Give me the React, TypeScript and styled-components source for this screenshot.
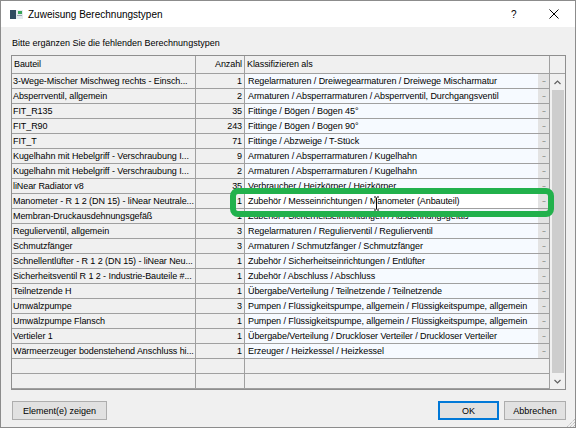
import React from "react";
import styled, { createGlobalStyle } from "styled-components";

const GlobalStyle = createGlobalStyle`
    html, body { margin: 0; padding: 0; background: #f0f0f0; }
    body { font-family: "Liberation Sans", Arial, sans-serif; }
    * { box-sizing: border-box; }
`;

type Entry = { part: string; count: number; cls: string };

const entries: Entry[] = [
    { part: "3-Wege-Mischer Mischweg rechts - Einsch...", count: 1, cls: "Regelarmaturen / Dreiwegearmaturen / Dreiwege Mischarmatur" },
    { part: "Absperrventil, allgemein", count: 2, cls: "Armaturen / Absperrarmaturen / Absperrventil, Durchgangsventil" },
    { part: "FIT_R135", count: 35, cls: "Fittinge / Bögen / Bogen 45°" },
    { part: "FIT_R90", count: 243, cls: "Fittinge / Bögen / Bogen 90°" },
    { part: "FIT_T", count: 71, cls: "Fittinge / Abzweige / T-Stück" },
    { part: "Kugelhahn mit Hebelgriff - Verschraubung I...", count: 9, cls: "Armaturen / Absperrarmaturen / Kugelhahn" },
    { part: "Kugelhahn mit Hebelgriff - Verschraubung I...", count: 2, cls: "Armaturen / Absperrarmaturen / Kugelhahn" },
    { part: "liNear Radiator v8", count: 35, cls: "Verbraucher / Heizkörper / Heizkörper" },
    { part: "Manometer - R 1 2 (DN 15) - liNear Neutrale...", count: 1, cls: "Zubehör / Messeinrichtungen / Manometer (Anbauteil)" },
    { part: "Membran-Druckausdehnungsgefäß", count: 1, cls: "Zubehör / Sicherheitseinrichtungen / Ausdehnungsgefäß" },
    { part: "Regulierventil, allgemein", count: 3, cls: "Regelarmaturen / Regulierventil / Regulierventil" },
    { part: "Schmutzfänger", count: 3, cls: "Armaturen / Schmutzfänger / Schmutzfänger" },
    { part: "Schnellentlüfter - R 1 2 (DN 15) - liNear Neu...", count: 1, cls: "Zubehör / Sicherheitseinrichtungen / Entlüfter" },
    { part: "Sicherheitsventil R 1 2 - Industrie-Bauteile #...", count: 1, cls: "Zubehör / Abschluss / Abschluss" },
    { part: "Teilnetzende H", count: 1, cls: "Übergabe/Verteilung / Teilnetzende / Teilnetzende" },
    { part: "Umwälzpumpe", count: 3, cls: "Pumpen / Flüssigkeitspumpe, allgemein / Flüssigkeitspumpe, allgemein" },
    { part: "Umwälzpumpe Flansch", count: 1, cls: "Pumpen / Flüssigkeitspumpe, allgemein / Flüssigkeitspumpe, allgemein" },
    { part: "Vertieler 1", count: 1, cls: "Übergabe/Verteilung / Druckloser Verteiler / Druckloser Verteiler" },
    { part: "Wärmeerzeuger bodenstehend Anschluss hi...", count: 1, cls: "Erzeuger / Heizkessel / Heizkessel" },
];

const EDIT_ROW = 8;
const EMPTY_ROWS = 2;

const COL_PART = 184;
const COL_COUNT = 49;
const COL_CLASS = 305;
const SCROLL_W = 15;

const Window = styled.div`
    position: relative;
    width: 576px;
    height: 428px;
    border: 1px solid #8c8c8c;
    background: #f0f0f0;
    display: flex;
    flex-direction: column;
    overflow: hidden;
`;

const TitleBar = styled.div`
    height: 26px;
    background: #ffffff;
    display: flex;
    align-items: center;
    padding: 0 0 0 9px;
`;

const TitleText = styled.span`
    margin-left: 5px;
    font-size: 10px;
    color: #000;
    flex: 1;
`;

const HelpGlyph = styled.span`
    font-size: 10px;
    color: #000;
    width: 38px;
    text-align: left;
`;

const CloseBox = styled.span`
    width: 26px;
    display: flex;
    align-items: center;
`;

const Content = styled.div`
    flex: 1;
    display: flex;
    flex-direction: column;
    padding: 10px 9px 0 10px;
`;

const Prompt = styled.div`
    font-size: 9px;
    line-height: 12px;
    color: #000;
    padding-left: 1px;
    margin-bottom: 6px;
`;

const Grid = styled.div`
    width: 555px;
    border: 1px solid #8f8f8f;
    background: #f0f0f0;
    font-size: 9px;
    letter-spacing: -0.08px;
    color: #000;
`;

const HeaderRow = styled.div`
    display: flex;
    height: 18px;
    border-bottom: 1px solid #a0a0a0;
`;

const HeaderCell = styled.div<{ $w: number; $align?: "left" | "right"; $last?: boolean }>`
    width: ${(p) => p.$w}px;
    flex: none;
    line-height: 17px;
    padding: 0 2px;
    text-align: ${(p) => p.$align ?? "left"};
    border-right: ${(p) => (p.$last ? "none" : "1px solid #a0a0a0")};
    white-space: nowrap;
    overflow: hidden;
`;

const BodyWrap = styled.div`
    display: flex;
`;

const RowList = styled.div`
    display: flex;
    flex-direction: column;
`;

const Row = styled.div`
    display: flex;
    height: 15px;
    border-bottom: 1px solid #a0a0a0;
`;

const Cell = styled.div<{ $w: number; $align?: "left" | "right" }>`
    width: ${(p) => p.$w}px;
    flex: none;
    line-height: 14px;
    padding: 0 2px 0 1px;
    text-align: ${(p) => p.$align ?? "left"};
    border-right: 1px solid #a0a0a0;
    white-space: nowrap;
    overflow: hidden;
`;

const ClassCell = styled.div<{ $editing?: boolean }>`
    width: ${COL_CLASS}px;
    flex: none;
    display: flex;
    border-right: 1px solid #a0a0a0;
    background: ${(p) => (p.$editing ? "#ffffff" : "#f6faff")};
`;

const ClassText = styled.span`
    flex: 1;
    line-height: 14px;
    padding-left: 3px;
    white-space: nowrap;
    overflow: hidden;
`;

const DotsButton = styled.span`
    width: 11px;
    flex: none;
    background: #e3e3e3;
    color: #555;
    font-size: 7px;
    line-height: 12px;
    text-align: center;
    letter-spacing: -1px;
`;

const ScrollBar = styled.div`
    width: ${SCROLL_W}px;
    display: flex;
    flex-direction: column;
    background: #f0f0f0;
`;

const ScrollArrow = styled.div`
    height: 16px;
    display: flex;
    align-items: center;
    justify-content: center;
`;

const ScrollThumb = styled.div`
    flex: 1;
    margin: 0 1px 0 2px;
    background: #cdcdcd;
`;

const Footer = styled.div`
    display: flex;
    margin-top: 11px;
    gap: 5px;
`;

const Button = styled.button<{ $w: number; $primary?: boolean }>`
    width: ${(p) => p.$w}px;
    height: 19px;
    padding: 0;
    font-family: "Liberation Sans", Arial, sans-serif;
    font-size: 9px;
    color: #000;
    background: #e1e1e1;
    border: 1px solid ${(p) => (p.$primary ? "#0078d7" : "#adadad")};
    box-shadow: ${(p) => (p.$primary ? "inset 0 0 0 1px #0078d7" : "none")};
`;

const Spacer = styled.div`
    flex: 1;
`;

const Highlight = styled.div`
    position: absolute;
    left: 229px;
    top: 187px;
    width: 324px;
    height: 29px;
    border: 6px solid #22b14c;
    border-radius: 8px;
    pointer-events: none;
`;

const Overlay = styled.svg<{ $x: number; $y: number }>`
    position: absolute;
    left: ${(p) => p.$x}px;
    top: ${(p) => p.$y}px;
    pointer-events: none;
`;

const WindowIcon = () => (
    <svg width="13" height="9" viewBox="0 0 13 9">
        <rect x="0" y="0" width="13" height="9" fill="#e4eaee" />
        <rect x="0" y="0" width="6" height="9" fill="#2f4a5f" />
        <rect x="8" y="1" width="4" height="3" fill="#3aa55a" />
        <rect x="7" y="5" width="5" height="1" fill="#9aa8b2" />
    </svg>
);

const Chevron = ({ down }: { down?: boolean }) => (
    <svg width="7" height="5" viewBox="0 0 7 5">
        <polyline
            points={down ? "0.5,1 3.5,4 6.5,1" : "0.5,4 3.5,1 6.5,4"}
            fill="none"
            stroke="#606060"
            strokeWidth="1.2"
        />
    </svg>
);

export default function App() {
    return (
        <>
            <GlobalStyle />
            <Window>
                <TitleBar>
                    <WindowIcon />
                    <TitleText>Zuweisung Berechnungstypen</TitleText>
                    <HelpGlyph>?</HelpGlyph>
                    <CloseBox>
                        <svg width="10" height="10" viewBox="0 0 10 10">
                            <path d="M0.5 0.5 L9.5 9.5 M9.5 0.5 L0.5 9.5" stroke="#000" strokeWidth="1" />
                        </svg>
                    </CloseBox>
                </TitleBar>

                <Content>
                    <Prompt>Bitte ergänzen Sie die fehlenden Berechnungstypen</Prompt>

                    <Grid>
                        <HeaderRow>
                            <HeaderCell $w={COL_PART}>Bauteil</HeaderCell>
                            <HeaderCell $w={COL_COUNT} $align="right">Anzahl</HeaderCell>
                            <HeaderCell $w={COL_CLASS}>Klassifizieren als</HeaderCell>
                            <HeaderCell $w={SCROLL_W} $last />
                        </HeaderRow>
                        <BodyWrap>
                            <RowList>
                                {entries.map((e, i) => (
                                    <Row key={i}>
                                        <Cell $w={COL_PART}>{e.part}</Cell>
                                        <Cell $w={COL_COUNT} $align="right">{e.count}</Cell>
                                        <ClassCell $editing={i === EDIT_ROW}>
                                            <ClassText>{e.cls}</ClassText>
                                            <DotsButton>...</DotsButton>
                                        </ClassCell>
                                    </Row>
                                ))}
                                {Array.from({ length: EMPTY_ROWS }).map((_, i) => (
                                    <Row key={`empty-${i}`}>
                                        <Cell $w={COL_PART} />
                                        <Cell $w={COL_COUNT} />
                                        <Cell $w={COL_CLASS} />
                                    </Row>
                                ))}
                            </RowList>
                            <ScrollBar>
                                <ScrollArrow><Chevron /></ScrollArrow>
                                <ScrollThumb />
                                <ScrollArrow><Chevron down /></ScrollArrow>
                            </ScrollBar>
                        </BodyWrap>
                    </Grid>

                    <Footer>
                        <Button $w={95} style={{ marginLeft: 1 }}>Element(e) zeigen</Button>
                        <Spacer />
                        <Button $w={61} $primary>OK</Button>
                        <Button $w={62}>Abbrechen</Button>
                    </Footer>
                </Content>

                <Highlight />

                <Overlay $x={372} $y={195} width="7" height="15" viewBox="0 0 7 15">
                    <path d="M1 1 H3 M4 1 H6 M3.5 1.5 V13.5 M1 14 H3 M4 14 H6" stroke="#fff" strokeWidth="2.2" fill="none" />
                    <path d="M1 1 H3 M4 1 H6 M3.5 1.5 V13.5 M1 14 H3 M4 14 H6" stroke="#000" strokeWidth="1" fill="none" />
                </Overlay>

                <Overlay $x={564} $y={416} width="11" height="11" viewBox="0 0 11 11">
                    <path d="M10 2 L2 10 M10 5 L5 10 M10 8 L8 10" stroke="#a8a8a8" strokeWidth="1" strokeDasharray="1 1" />
                </Overlay>
            </Window>
        </>
    );
}
